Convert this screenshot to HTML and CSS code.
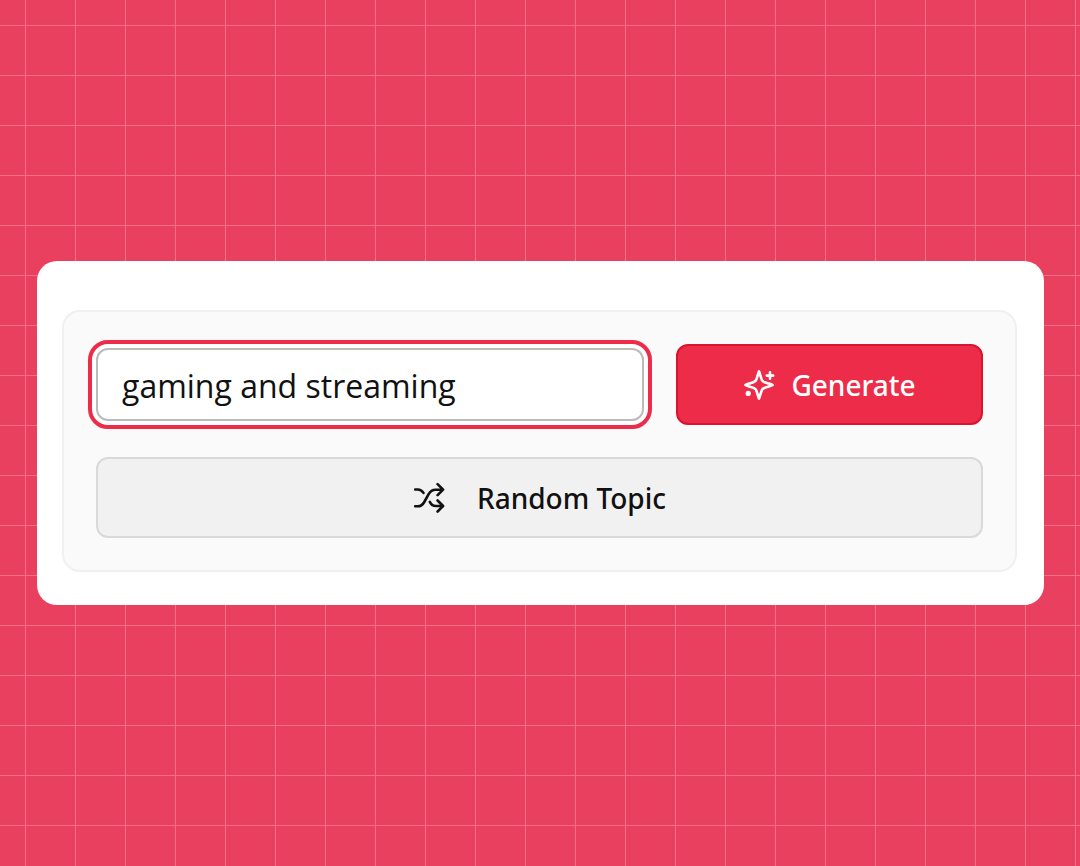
FILE: index.html
```html
<!DOCTYPE html>
<html lang="en">
<head>
<meta charset="utf-8">
<meta name="viewport" content="width=device-width, initial-scale=1">
<title>Topic generator</title>
<link rel="stylesheet" href="styles.css">
</head>
<body>
<main class="card">
  <form class="panel">
    <div class="row">
      <input class="topic" type="text" aria-label="Topic" value="gaming and streaming">
      <button class="btn btn-primary" type="button">
        <svg class="icon" viewBox="0 0 32 32" aria-hidden="true">
          <path d="M16 2.400C16.900 4.200 17.700 8.500 19 11.200C20 13.200 22.500 13.700 24.500 14.200C26.500 14.800 28.400 15.200 29.600 16C28.400 16.800 26.500 17.200 24.500 17.800C22.500 18.300 20 18.800 19 20.800C17.700 23.500 16.900 27.800 16 29.600C15.100 27.800 14.300 23.500 13 20.800C12 18.800 9.500 18.300 7.500 17.800C5.500 17.200 3.600 16.800 2.400 16C3.600 15.200 5.500 14.800 7.500 14.200C9.500 13.700 12 13.200 13 11.200C14.300 8.500 15.100 4.200 16 2.400Z"/>
          <path d="M27 3.400v6.400M23.800 6.600h6.400"/>
          <circle class="dot" cx="5.200" cy="24.400" r="2.600"/>
        </svg>
        <span>Generate</span>
      </button>
    </div>
    <button class="btn btn-secondary" type="button">
      <svg class="icon" viewBox="0 0 32 32" aria-hidden="true">
        <path d="M2.200 7.500h2.600c2.600 0 4.300 1.300 5.700 3.400M2.200 24.300h2.600c3 0 4.900-1.500 6.500-4.300l4.200-7.600c1.700-3.100 3.600-4.700 7-4.700h7.400M16.800 19.800c1.500 2.900 3.300 4.200 6 4.200h7.100M24.600 2.200l5.500 5.500-5.500 5.500M24.600 18.500l5.500 5.500-5.500 5.500"/>
      </svg>
      <span>Random Topic</span>
    </button>
  </form>
</main>
</body>
</html>
```
FILE: styles.css
```css
* {
  box-sizing: border-box;
}

body {
  margin: 0;
  min-height: 100vh;
  display: flex;
  align-items: center;
  padding: 0 36px 0 37px;
  font-family: "Open Sans", "Noto Sans", sans-serif;
  background-color: #ea4060;
  background-image:
    linear-gradient(90deg, #f36f88 1px, transparent 1px),
    linear-gradient(#f36f88 1px, transparent 1px);
  background-size: 50px 50px;
  background-position: 25px 25px;
}

.card {
  flex: 1;
  padding: 49px 27px 33px 25px;
  border-radius: 20px;
  background: #fff;
}

.panel {
  display: grid;
  gap: 32px;
  padding: 32px;
  border: 2px solid #f0f0f0;
  border-radius: 18px;
  background: #fafafa;
}

.row {
  display: grid;
  grid-template-columns: 548fr 307fr;
  align-items: center;
  gap: 32px;
}

.topic {
  width: 100%;
  min-width: 0;
  height: 73px;
  padding: 2px 24px 0;
  border: 2px solid #bbb;
  border-radius: 12px;
  outline: 4px solid #ed2c49;
  outline-offset: 4px;
  box-shadow: 0 0 0 4px #fff;
  background: #fff;
  color: #111;
  font-family: inherit;
  font-size: 32px;
}

.btn {
  display: flex;
  align-items: center;
  justify-content: center;
  height: 81px;
  border: 2px solid;
  border-radius: 12px;
  font-family: "Noto Sans", "Open Sans", sans-serif;
  font-size: 28px;
  font-weight: 500;
}

.btn-primary {
  gap: 16px;
  border-color: #d81430;
  background: #ed2c49;
  color: #fff;
}

.btn-secondary {
  gap: 32px;
  border-color: #d9d9d9;
  background: #f1f1f1;
  color: #111;
}

.icon {
  width: 32px;
  height: 32px;
  fill: none;
  stroke: currentColor;
  stroke-width: 2.6;
  stroke-linecap: round;
  stroke-linejoin: round;
}

.dot {
  fill: currentColor;
  stroke: none;
}
```
